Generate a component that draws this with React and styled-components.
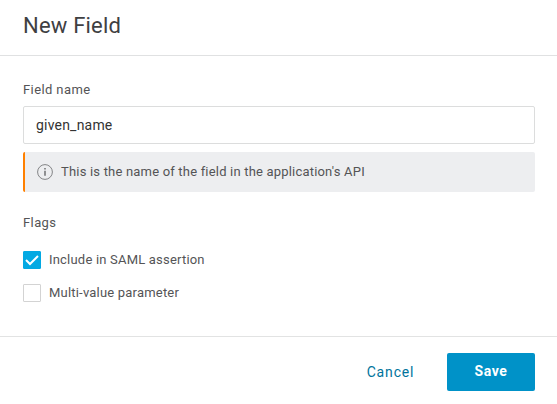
import React from "react";
import styled, { createGlobalStyle } from "styled-components";

const GlobalStyle = createGlobalStyle`
  * { box-sizing: border-box; }
  body { margin: 0; background: #fff; font-family: Roboto, sans-serif; color: #545456; -webkit-font-smoothing: antialiased; }
`;

const Dialog = styled.form`
  display: flex;
  flex-direction: column;
  width: 557px;
  height: 404px;
  background: #fff;
`;

const Header = styled.header`
  height: 56px;
  padding: 12px 23px 0;
  border-bottom: 1px solid #e0e1e2;
`;

const Title = styled.h1`
  margin: 0;
  font-size: 22px;
  line-height: 28px;
  font-weight: 400;
  letter-spacing: 0.2px;
  color: #3f4042;
`;

const Body = styled.div`
  flex: 1;
  display: flex;
  flex-direction: column;
  padding: 24px 22px 0 23px;
`;

const Label = styled.label`
  font-size: 13px;
  line-height: 20px;
  letter-spacing: 0.4px;
  margin-bottom: 6px;
`;

const Input = styled.input`
  height: 38px;
  padding: 0 12px;
  border: 1px solid #dcdddd;
  border-radius: 2px;
  outline: 0;
  font: 400 14px Roboto, sans-serif;
  letter-spacing: 0.2px;
  color: #333;
`;

const Hint = styled.div`
  display: flex;
  align-items: center;
  gap: 8px;
  height: 40px;
  margin: 8px 0 21px;
  padding-left: 12px;
  border-left: 2px solid #ff8000;
  border-radius: 2px;
  background: #edeef0;
  font-size: 13px;
  letter-spacing: 0.19px;
`;

const RowText = styled.span`
  padding-bottom: 2px;
`;

const Checks = styled.div`
  display: flex;
  flex-direction: column;
  gap: 15px;
  margin-top: 12px;
`;

const Check = styled.label`
  display: flex;
  align-items: center;
  gap: 8px;
  height: 18px;
  font-size: 13px;
  letter-spacing: 0.2px;
`;

const Box = styled.span`
  display: flex;
  width: 18px;
  height: 18px;
  border: 1px solid ${(p) => (p.$on ? "#03a9e3" : "#d3d3d3")};
  border-radius: 1px;
  background: ${(p) => (p.$on ? "#03a9e3" : "#fff")};
`;

const Footer = styled.footer`
  display: flex;
  justify-content: flex-end;
  height: 68px;
  padding: 16px 22px 0;
  border-top: 1px solid #e2e3e3;
`;

const Button = styled.button`
  height: 38px;
  width: ${(p) => (p.$primary ? "88px" : "113px")};
  padding: ${(p) => (p.$primary ? "0 0 2px" : "0")};
  border: 0;
  border-radius: 2px;
  background: ${(p) => (p.$primary ? "#0092c8" : "transparent")};
  color: ${(p) => (p.$primary ? "#fff" : "#00749c")};
  font: ${(p) => (p.$primary ? 700 : 400)} 14px Roboto, sans-serif;
  letter-spacing: ${(p) => (p.$primary ? "0.6px" : "0.85px")};
`;

export default function App() {
  return (
    <>
      <GlobalStyle />
      <Dialog>
        <Header><Title>New Field</Title></Header>
        <Body>
          <Label htmlFor="name">Field name</Label>
          <Input id="name" defaultValue="given_name" />
          <Hint>
            <svg width="16" height="16" viewBox="0 0 16 16" fill="none" stroke="#77787a">
              <circle cx="8" cy="8" r="7.4" strokeWidth="0.9" />
              <path d="M8 6.7v5.1M8 4.1v1.5" strokeWidth="1.6" />
            </svg>
            <RowText>This is the name of the field in the application's API</RowText>
          </Hint>
          <Label as="div">Flags</Label>
          <Checks>
            <Check>
              <Box $on>
                <svg width="16" height="16" viewBox="0 0 16 16" fill="none" stroke="#fff" strokeWidth="2">
                  <path d="M2 8l4 4 8-8" />
                </svg>
              </Box>
              <RowText>Include in SAML assertion</RowText>
            </Check>
            <Check>
              <Box />
              <RowText>Multi-value parameter</RowText>
            </Check>
          </Checks>
        </Body>
        <Footer>
          <Button type="button">Cancel</Button>
          <Button type="button" $primary>Save</Button>
        </Footer>
      </Dialog>
    </>
  );
}
